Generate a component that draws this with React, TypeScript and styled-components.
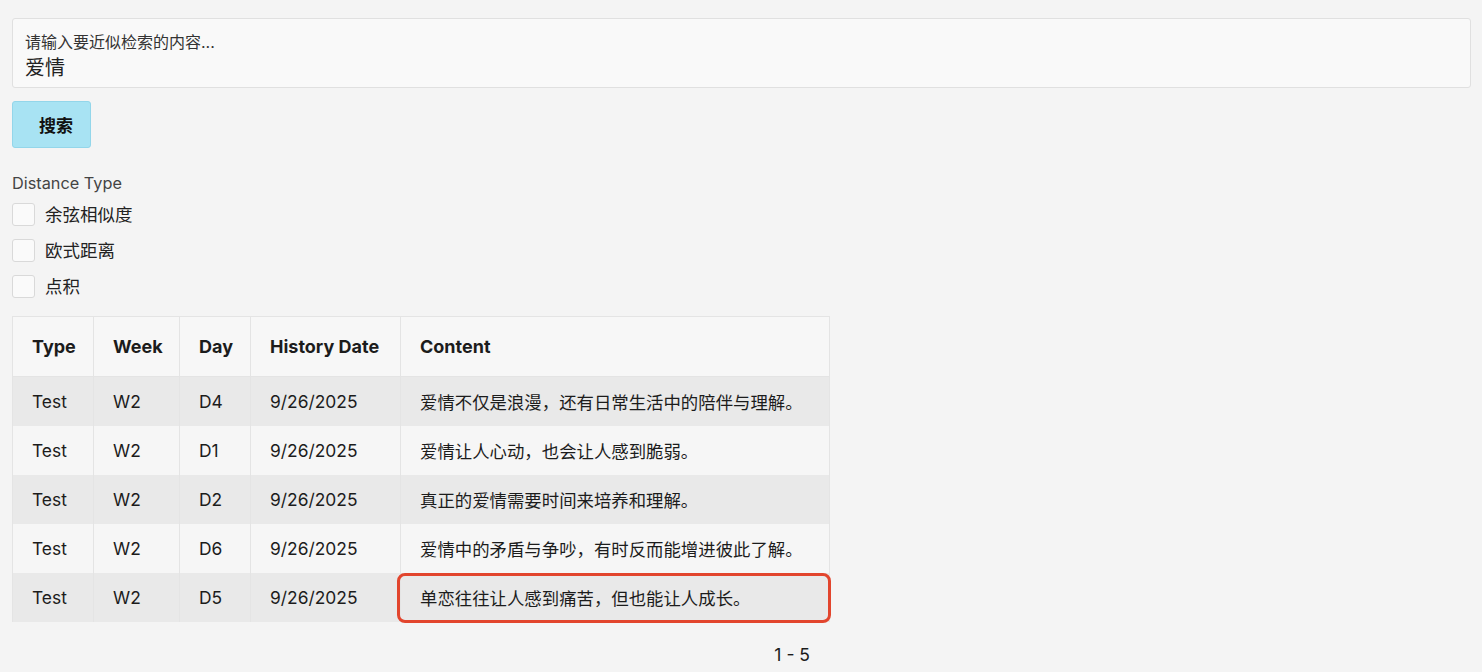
import styled, { createGlobalStyle } from 'styled-components';

const GlobalStyle = createGlobalStyle`
  body {
    margin: 0;
    background: #f4f4f4;
    font-family: Inter, "Noto Sans CJK SC", sans-serif;
    color: #1a1a1a;
  }
`;

const Page = styled.div`
  padding: 18px 11px 0 12px;
  display: flex;
  flex-direction: column;
  align-items: flex-start;
`;

const InputBox = styled.div`
  box-sizing: border-box;
  width: 100%;
  height: 70px;
  background: #f9f9f9;
  border: 1px solid #e0e0e0;
  border-radius: 3px;
  padding: 12px 12px 0 12px;
`;

const InputLabel = styled.div`
  font-size: 16px;
  color: #333;
  line-height: 22px;
`;

const InputValue = styled.div`
  font-size: 20px;
  color: #222;
  line-height: 28px;
  margin-top: 1px;
`;

const SearchButton = styled.button`
  margin-top: 13px;
  width: 79px;
  height: 47px;
  padding: 0 0 0 9px;
  background: #a8e3f3;
  border: 1px solid #93d6ea;
  border-radius: 3px;
  font-family: inherit;
  font-size: 17px;
  font-weight: 700;
  color: #111;
`;

const GroupLabel = styled.div`
  margin-top: 25px;
  font-size: 16.3px;
  color: #444;
  line-height: 20px;
`;

const OptionList = styled.div`
  display: flex;
  flex-direction: column;
  gap: 13px;
  margin-top: 10px;
`;

const Option = styled.label`
  display: flex;
  align-items: center;
  gap: 10px;
  font-size: 17.5px;
  line-height: 23px;
  color: #222;
  height: 23px;
`;

const Box = styled.span`
  box-sizing: border-box;
  width: 23px;
  height: 23px;
  background: #fafafa;
  border: 1px solid #d9d9d9;
  border-radius: 3px;
`;

const TableWrap = styled.div`
  position: relative;
  margin-top: 18px;
`;

const Table = styled.table`
  border-collapse: collapse;
  font-size: 17.4px;
  color: #1c1c1c;
`;

const Th = styled.th<{ w: number }>`
  box-sizing: border-box;
  width: ${p => p.w}px;
  height: 60px;
  text-align: left;
  padding: 0 0 0 19px;
  font-size: 18px;
  font-weight: 700;
  background: #f7f7f7;
  border: 1px solid #e4e4e4;
  white-space: nowrap;
`;

const Tr = styled.tr<{ shaded: boolean }>`
  background: ${p => (p.shaded ? '#e9e9e9' : '#f6f6f6')};
`;

const Td = styled.td`
  height: 49px;
  padding: 0 0 0 19px;
  border: 1px solid #e4e4e4;
  border-top: none;
  border-bottom: none;
  white-space: nowrap;
`;

const Highlight = styled.div`
  position: absolute;
  left: 385px;
  bottom: -1px;
  width: 434px;
  height: 50px;
  box-sizing: border-box;
  border: 3.5px solid #e2452d;
  border-radius: 8px;
  pointer-events: none;
`;

const Pager = styled.div`
  width: 817px;
  text-align: right;
  font-size: 17.5px;
  color: #1c1c1c;
  margin-top: 22px;
  padding-right: 19px;
  box-sizing: border-box;
`;

const columns = [
  { title: 'Type', w: 81 },
  { title: 'Week', w: 86 },
  { title: 'Day', w: 71 },
  { title: 'History Date', w: 150 },
  { title: 'Content', w: 429 },
];

const rows = [
  ['Test', 'W2', 'D4', '9/26/2025', '爱情不仅是浪漫，还有日常生活中的陪伴与理解。'],
  ['Test', 'W2', 'D1', '9/26/2025', '爱情让人心动，也会让人感到脆弱。'],
  ['Test', 'W2', 'D2', '9/26/2025', '真正的爱情需要时间来培养和理解。'],
  ['Test', 'W2', 'D6', '9/26/2025', '爱情中的矛盾与争吵，有时反而能增进彼此了解。'],
  ['Test', 'W2', 'D5', '9/26/2025', '单恋往往让人感到痛苦，但也能让人成长。'],
];

const options = ['余弦相似度', '欧式距离', '点积'];

export default function App() {
  return (
    <>
      <GlobalStyle />
      <Page>
        <InputBox>
          <InputLabel>请输入要近似检索的内容...</InputLabel>
          <InputValue>爱情</InputValue>
        </InputBox>
        <SearchButton>搜索</SearchButton>
        <GroupLabel>Distance Type</GroupLabel>
        <OptionList>
          {options.map(o => (
            <Option key={o}>
              <Box />
              {o}
            </Option>
          ))}
        </OptionList>
        <TableWrap>
          <Table>
            <thead>
              <tr>
                {columns.map(c => (
                  <Th key={c.title} w={c.w}>{c.title}</Th>
                ))}
              </tr>
            </thead>
            <tbody>
              {rows.map((r, i) => (
                <Tr key={i} shaded={i % 2 === 0}>
                  {r.map((cell, j) => (
                    <Td key={j}>{cell}</Td>
                  ))}
                </Tr>
              ))}
            </tbody>
          </Table>
          <Highlight />
        </TableWrap>
        <Pager>1 - 5</Pager>
      </Page>
    </>
  );
}
